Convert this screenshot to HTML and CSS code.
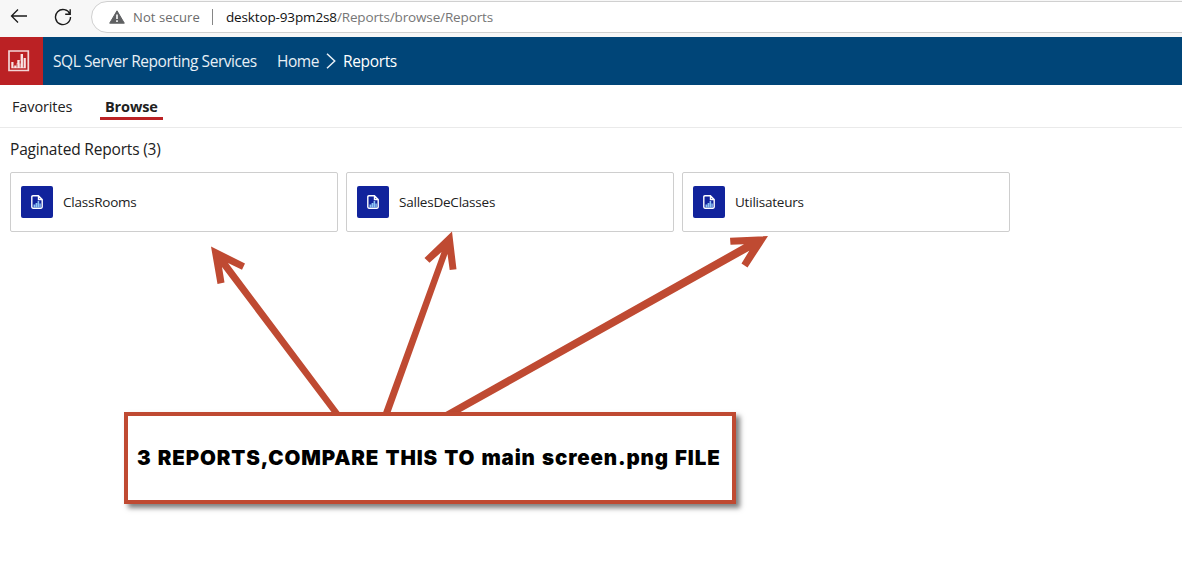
FILE: index.html
```html
<!DOCTYPE html>
<html lang="en">
<head>
<meta charset="utf-8">
<title>Reports - SQL Server Reporting Services</title>
<link rel="stylesheet" href="styles.css">
</head>
<body>
<div class="toolbar">
  <svg class="back" width="18" height="16" viewBox="0 0 18 16"><path d="M17 8H1.5M8 1.5L1.5 8L8 14.5"/></svg>
  <svg class="reload" width="18" height="18" viewBox="0 0 18 18"><path d="M15.9 6.1A7.5 7.5 0 1 0 16.5 9M16.2 1.2V6.2H11.2"/></svg>
  <div class="address">
    <svg class="warning" width="16" height="14" viewBox="0 0 16 14"><path d="M8 .8L15.3 13.2H.7Z" fill="#5f6062" stroke="#5f6062" stroke-linejoin="round"/><path d="M8 4.5V9M8 10.3V12" stroke="#fff" stroke-width="1.6"/></svg>
    <span class="not-secure">Not secure</span>
    <span class="divider"></span>
    <span class="url"><span class="host">desktop-93pm2s8</span><span class="path">/Reports/browse/Reports</span></span>
  </div>
</div>
<header class="header">
  <div class="logo"><svg width="22" height="22" viewBox="0 0 22 22"><path d="M1 1H20.300V20.500H1Z" fill="none" stroke="#f3d5d6" stroke-width="1.700"/><path d="M3.300 12H5.500V15.500H8.500V13.500H9.300V10H11.800V13.500H12.600V4H15V8H17.800V18.300H3.300Z" fill="#f8e4e4"/><path d="M5.800 15V17.500M9 14V17.500M12.200 11V17.500M15.400 8V17.500" stroke="#bb2124" stroke-width=".7"/></svg></div>
  <span class="product">SQL Server Reporting Services</span>
  <span class="home">Home</span>
  <svg class="chevron" width="10" height="16" viewBox="0 0 10 16"><path d="M1 .8L8.700 8L1 15.200"/></svg>
  <span class="current">Reports</span>
</header>
<nav class="tabs">
  <span class="tab favorites">Favorites</span>
  <span class="tab active"><span class="browse">Browse</span></span>
</nav>
<main class="content">
  <h1 class="heading">Paginated Reports (3)</h1>
  <div class="cards">
    <div class="card"><span class="tile"><svg width="12" height="14" viewBox="0 0 12 14"><path d="M7.500 .8H1.900Q.8 .8 .8 1.900V12.100Q.8 13.200 1.900 13.200H10.100Q11.200 13.200 11.200 12.100V4.500L7.500 .8V4.500H11.200" fill="none" stroke="#fff" stroke-width="1.400"/><path d="M2.500 9.500H4.300V12.500H2.500ZM4.600 8H6.300V12.500H4.600ZM6.600 6H8.200V12.500H6.600ZM8.500 8.500H9.800V12.500H8.500Z" fill="#8fc5f5"/></svg></span><span class="name">ClassRooms</span></div>
    <div class="card"><span class="tile"><svg width="12" height="14" viewBox="0 0 12 14"><path d="M7.500 .8H1.900Q.8 .8 .8 1.900V12.100Q.8 13.200 1.900 13.200H10.100Q11.200 13.200 11.200 12.100V4.500L7.500 .8V4.500H11.200" fill="none" stroke="#fff" stroke-width="1.400"/><path d="M2.500 9.500H4.300V12.500H2.500ZM4.600 8H6.300V12.500H4.600ZM6.600 6H8.200V12.500H6.600ZM8.500 8.500H9.800V12.500H8.500Z" fill="#8fc5f5"/></svg></span><span class="name">SallesDeClasses</span></div>
    <div class="card"><span class="tile"><svg width="12" height="14" viewBox="0 0 12 14"><path d="M7.500 .8H1.900Q.8 .8 .8 1.900V12.100Q.8 13.200 1.900 13.200H10.100Q11.200 13.200 11.200 12.100V4.500L7.500 .8V4.500H11.200" fill="none" stroke="#fff" stroke-width="1.400"/><path d="M2.500 9.500H4.300V12.500H2.500ZM4.600 8H6.300V12.500H4.600ZM6.600 6H8.200V12.500H6.600ZM8.500 8.500H9.800V12.500H8.500Z" fill="#8fc5f5"/></svg></span><span class="name">Utilisateurs</span></div>
  </div>
</main>
<svg class="arrows" width="1182" height="588" viewBox="0 0 1182 588">
  <path d="M211 246.500L245 263.500L242 269.800L228 263L341 414H333L222 267L224.500 282.500L217.500 284Z"/>
  <path d="M452 231.500L424.500 258L429.500 262.800L441.500 252L382.500 414H390L447.500 254L449.700 270L456.500 269.300Z"/>
  <path d="M768 236L730 237.700L730.500 244.700L744 244.300L442 414H457L749.300 250.700L741.500 263.500L747.500 267.500Z"/>
</svg>
<div class="callout"><span class="note">3 REPORTS,COMPARE THIS TO main screen.png FILE</span></div>
</body>
</html>
```
FILE: styles.css
```css
* { box-sizing: border-box; }
body { margin: 0; height: 588px; overflow: hidden; position: relative; background: #fff; color: #212121; font-family: "Open Sans", "Noto Sans", sans-serif; }
svg { display: block; flex: none; }
span { white-space: nowrap; }
.toolbar { height: 37px; background: #f7f7f7; display: flex; align-items: flex-start; overflow: hidden; }
.back { margin: 8px 0 0 10px; fill: none; stroke: #1b1b1b; stroke-width: 1.3; }
.reload { margin: 8px 0 0 26px; fill: none; stroke: #1b1b1b; stroke-width: 1.4; }
.address { margin: 1px 0 0 19px; width: 1150px; height: 32px; flex: none; border: 1px solid #d0d0d0; border-radius: 16px; background: #fff; display: flex; align-items: center; font-size: 13px; }
.warning { margin-left: 17px; }
.not-secure { margin-left: 8px; width: 71px; color: #6b6b6b; letter-spacing: .1px; }
.divider { width: 1px; height: 16px; background: #868686; margin-left: 8px; }
.url { margin-left: 13px; font-size: 13.5px; letter-spacing: -.14px; }
.host { color: #111; }
.path { color: #767676; }
.header { height: 48px; background: #004578; display: flex; align-items: center; color: #e8f0f6; font-size: 15.5px; letter-spacing: -.44px; }
.logo { width: 43px; height: 48px; background: #bb2124; padding: 13px 0 0 8px; flex: none; }
.product { margin-left: 10px; width: 224px; }
.home { width: 49px; }
.chevron { fill: none; stroke: #e8f0f6; stroke-width: 1.5; }
.current { margin-left: 7px; color: #fff; letter-spacing: -.35px; }
.tabs { height: 43px; border-bottom: 1px solid #eaeaea; display: flex; font-size: 14.5px; letter-spacing: -.12px; line-height: 20px; padding: 12px 0 0 12px; }
.favorites { width: 88px; }
.active { width: 63px; height: 23px; padding-left: 5px; border-bottom: 3px solid #bb2124; font-weight: 700; }
.content { padding: 10px; }
.heading { margin: 0; font-size: 15.5px; letter-spacing: -.18px; line-height: 22px; font-weight: 400; }
.cards { margin-top: 12px; display: flex; gap: 8px; }
.card { width: 328px; height: 60px; border: 1px solid #cecece; border-radius: 2px; display: flex; align-items: center; padding-left: 10px; font-size: 13.5px; letter-spacing: -.22px; }
.tile { width: 32px; height: 32px; border-radius: 2px; background: #11239c; display: flex; align-items: center; justify-content: center; }
.name { margin-left: 10px; }
.arrows { position: absolute; left: 0; top: 0; fill: #bf4a32; }
.callout { position: absolute; left: 124px; top: 412px; width: 612px; height: 92px; border: 4px solid #bf4a32; background: #fff; box-shadow: 4px 4px 5px rgba(0,0,0,.5); display: flex; align-items: center; padding-left: 9px; }
.note { color: #000; font: 900 20.5px/24px Inter, sans-serif; letter-spacing: .85px; word-spacing: 1.3px; }
```
